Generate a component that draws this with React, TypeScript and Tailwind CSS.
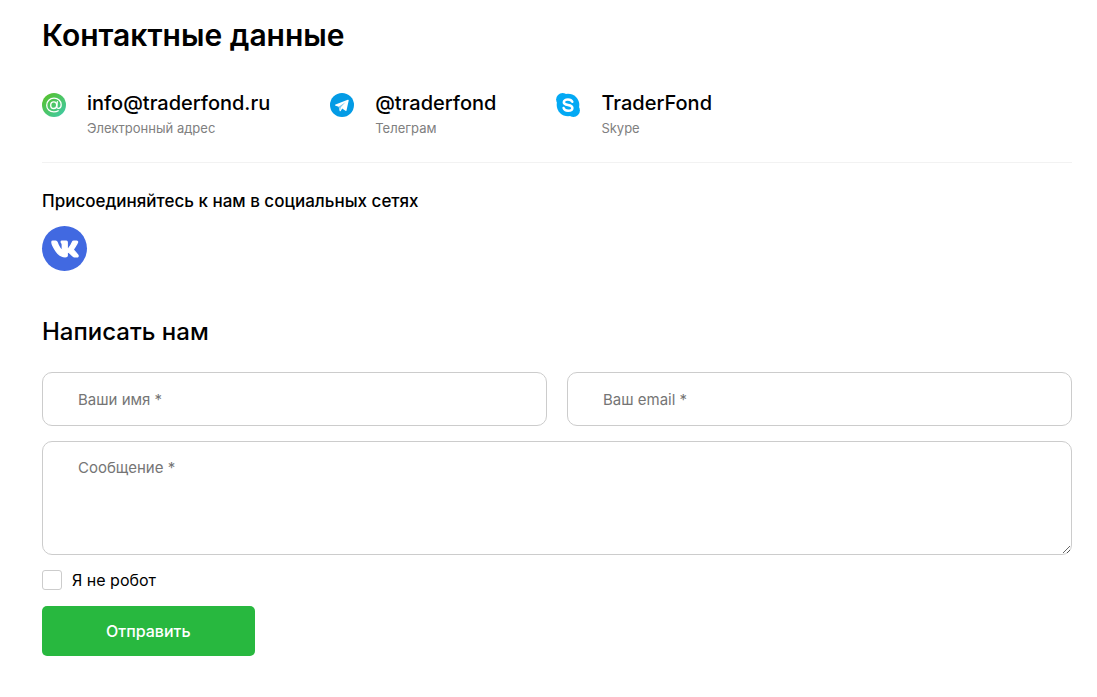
import type { ReactNode } from 'react';
import { FaVk } from 'react-icons/fa';

const EmailIcon = () => (
  <svg className="size-6" viewBox="0 0 24 24" fill="none" aria-hidden="true">
    <defs>
      <linearGradient id="email-bg" x1="4" y1="3" x2="20" y2="21" gradientUnits="userSpaceOnUse">
        <stop stopColor="#55c235" />
        <stop offset="1" stopColor="#42c99b" />
      </linearGradient>
    </defs>
    <circle cx="12" cy="12" r="12" fill="url(#email-bg)" />
    <ellipse cx="11.7" cy="12.2" rx="3" ry="3.3" stroke="#fff" strokeWidth="1.4" />
    <path
      d="M15.300 8.700l-.5 4.500c-.2 1.500.7 2.200 1.800 2.100 1.600-.1 2.600-1.700 2.600-3.600 0-4-3.200-6.500-7.200-6.500-4.200 0-7.300 3-7.300 7 0 3.900 3 6.700 7.100 6.700 1.700 0 3.200-.3 4.400-1.100"
      stroke="#fff"
      strokeWidth="1.3"
      strokeLinecap="round"
    />
  </svg>
);

const TelegramIcon = () => (
  <svg className="size-6" viewBox="0 0 24 24" aria-hidden="true">
    <circle cx="12" cy="12" r="12" fill="#039be5" />
    <path
      d="M5.500 11.600l12.300-4.800c.6-.2 1 .1.900.8l-2.200 9.800c-.1.500-.6.700-1.100.4l-3.200-2.300-1.500 2.400c-.4.500-1 .4-1.100-.2l-.9-3.900-3.100-1c-.7-.3-.8-.9-.1-1.200z"
      fill="#fff"
    />
    <path d="M8.700 13.800l7-4.800-4.900 5.300-.7 3z" fill="#7cc8ee" />
  </svg>
);

const SkypeIcon = () => (
  <svg className="size-6" viewBox="0 0 24 24" fill="none" aria-hidden="true">
    <g fill="#03a9f4">
      <circle cx="12" cy="12" r="11.300" />
      <circle cx="6.600" cy="6.600" r="6.500" />
      <circle cx="17.400" cy="17.400" r="6.500" />
    </g>
    <path
      d="M16.300 8.800c-.7-1.600-2.300-2.300-4.300-2.300-2.500 0-4.200 1-4.200 2.700 0 1.800 1.600 2.300 4.200 2.800 2.800.5 4.400 1 4.400 2.900 0 1.800-1.900 2.800-4.300 2.800-2.300 0-4-.9-4.500-2.700"
      stroke="#fff"
      strokeWidth="2.500"
      strokeLinecap="round"
    />
  </svg>
);

const contacts = [
  {
    title: 'info@traderfond.ru',
    label: 'Электронный адрес',
    href: 'mailto:info@traderfond.ru',
    icon: <EmailIcon />,
  },
  {
    title: '@traderfond',
    label: 'Телеграм',
    href: '#telegram',
    icon: <TelegramIcon />,
  },
  {
    title: 'TraderFond',
    label: 'Skype',
    href: 'skype:TraderFond',
    icon: <SkypeIcon />,
  },
];

type ContactProps = {
  title: string;
  label: string;
  href: string;
  icon: ReactNode;
};

const Contact = ({ title, label, href, icon }: ContactProps) => (
  <li className="flex gap-[21px]">
    <span className="pt-1">{icon}</span>
    <div>
      <a href={href} className="block text-xl leading-7 font-medium">
        {title}
      </a>
      <p className="mt-[3px] text-[13px] leading-4 text-[#808080]">{label}</p>
    </div>
  </li>
);

const fieldClass =
  'block w-full rounded-[10px] border border-[#cccccc] bg-white px-[35px] text-[15px] placeholder:text-[#757575]';

const ContactForm = () => (
  <form onSubmit={(e) => e.preventDefault()}>
    <div className="grid grid-cols-2 gap-5">
      <input type="text" aria-label="Ваши имя" placeholder="Ваши имя *" className={`${fieldClass} h-[54px]`} />
      <input type="email" aria-label="Ваш email" placeholder="Ваш email *" className={`${fieldClass} h-[54px]`} />
    </div>
    <textarea
      aria-label="Сообщение"
      placeholder="Сообщение *"
      className={`${fieldClass} mt-[15px] h-[114px] py-4 leading-5`}
    />
    <div className="mt-[15px] flex items-center gap-[10px]">
      <input
        id="not-robot"
        type="checkbox"
        className="size-5 appearance-none rounded-[3px] border border-[#cccccc] bg-white checked:bg-[#28b83f]"
      />
      <label htmlFor="not-robot" className="text-base leading-5">
        Я не робот
      </label>
    </div>
    <button
      type="submit"
      className="mt-4 h-[50px] cursor-pointer rounded-[5px] bg-[#28b83f] px-16 text-base font-medium text-white"
    >
      Отправить
    </button>
  </form>
);

export default function App() {
  return (
    <main className="bg-white pt-[15px] pr-[25px] pb-10 pl-[42px] font-['Inter','Liberation_Sans',sans-serif] text-black">
      <h1 className="text-3xl leading-10 font-semibold">Контактные данные</h1>

      <ul className="mt-[34px] flex gap-[60px] border-b border-[#f2f2f2] pb-[26px]">
        {contacts.map((contact) => (
          <Contact key={contact.title} {...contact} />
        ))}
      </ul>

      <h2 className="mt-[25px] text-[17px] leading-[26px] font-medium">Присоединяйтесь к нам в социальных сетях</h2>
      <a
        href="#vk"
        aria-label="VK"
        className="mt-3 flex size-[45px] items-center justify-center rounded-full bg-[#4169e1] text-white"
      >
        <FaVk className="size-7 overflow-visible stroke-current stroke-[28]" aria-hidden="true" />
      </a>

      <h2 className="mt-[45px] mb-6 text-2xl leading-8 font-medium">Написать нам</h2>
      <ContactForm />
    </main>
  );
}
